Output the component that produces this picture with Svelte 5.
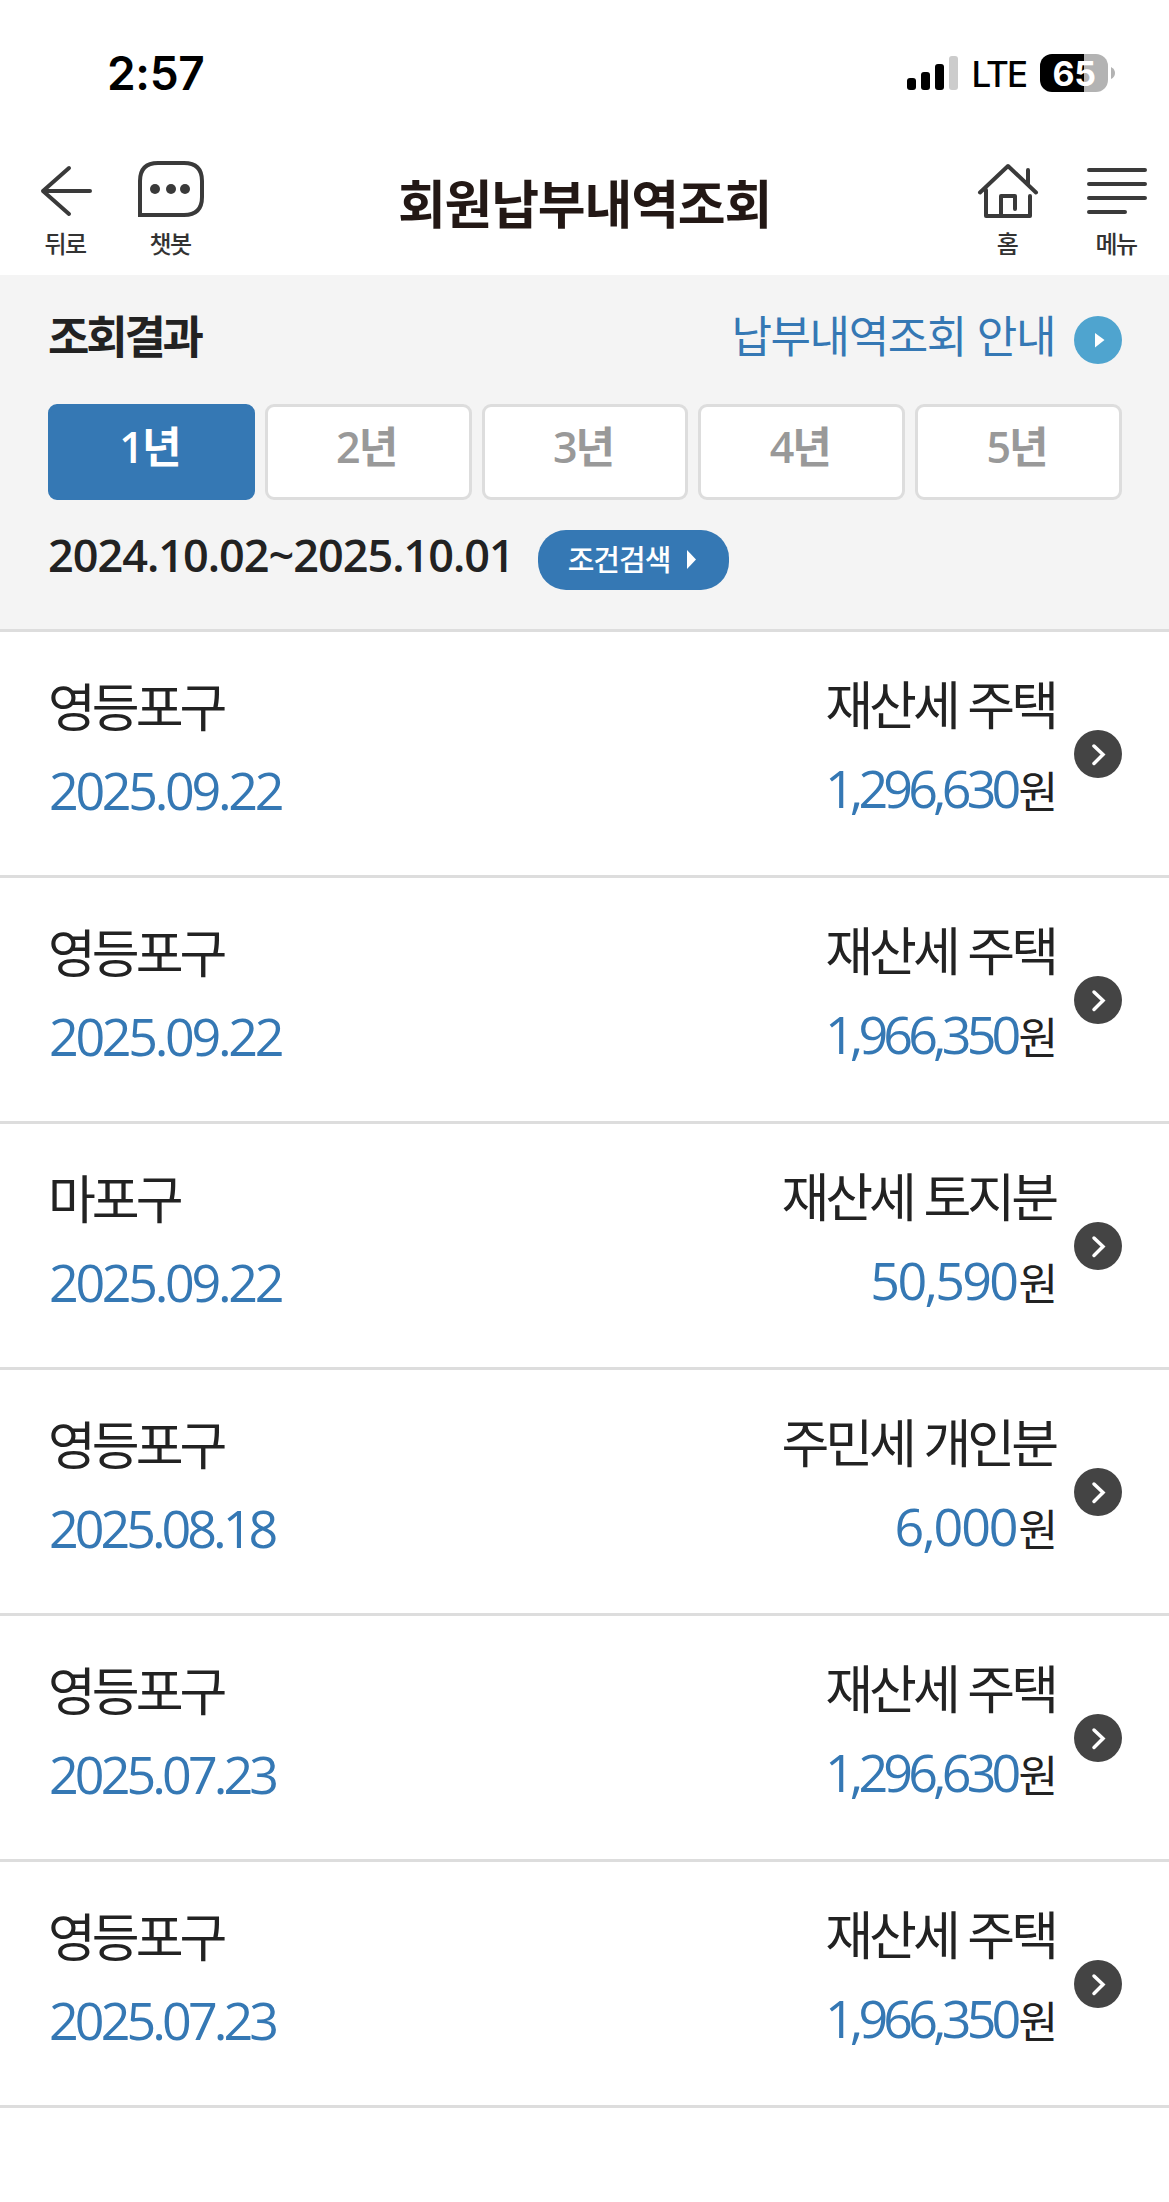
<script>
    const years = [1, 2, 3, 4, 5];
    let selectedYear = 1;

    const payments = [
        { district: "영등포구", date: "2025.09.22", tax: "재산세 주택", amount: "1,296,630" },
        { district: "영등포구", date: "2025.09.22", tax: "재산세 주택", amount: "1,966,350" },
        { district: "마포구", date: "2025.09.22", tax: "재산세 토지분", amount: "50,590" },
        { district: "영등포구", date: "2025.08.18", tax: "주민세 개인분", amount: "6,000" },
        { district: "영등포구", date: "2025.07.23", tax: "재산세 주택", amount: "1,296,630" },
        { district: "영등포구", date: "2025.07.23", tax: "재산세 주택", amount: "1,966,350" },
    ];

    // narrow characters tighten the whole number, wide ones loosen it
    const widths = { 0: 2.5, 1: -13, 7: -6, 8: 3, ",": -3, ".": -4 };

    function tracking(text) {
        const extra = [...text].reduce((sum, char) => sum + (widths[char] || 0), 0);
        return -3 + extra / text.length;
    }

    function selectYear(year) {
        selectedYear = year;
    }
</script>

<main class="page" lang="ko">
    <div class="status">
        <div class="status__time">2:57</div>
        <div class="status__right">
            <svg class="status__signal" width="52" height="36" viewBox="0 0 52 36">
                <rect x="0" y="23" width="9" height="12" rx="3" />
                <rect x="14" y="17" width="9" height="18" rx="3" />
                <rect x="28" y="9" width="9" height="26" rx="3" />
                <rect x="42" y="1" width="9" height="34" rx="3" fill="#ccc" />
            </svg>
            <span class="status__network">LTE</span>
            <div class="battery"><span>65</span></div>
            <svg width="5" height="12" viewBox="0 0 5 12">
                <path d="M0 0Q4 2 4 6T0 12z" fill="#b3b3b3" />
            </svg>
        </div>
    </div>

    <header class="header">
        <button class="header__button back">
            <svg width="66" height="60" viewBox="0 0 66 60">
                <path d="M36 9L10 32L36 55M10 32H57" />
            </svg>
            <span>뒤로</span>
        </button>
        <button class="header__button chat">
            <svg width="68" height="60" viewBox="0 0 68 60">
                <path d="M3 56V22Q3 4 21 4H47Q65 4 65 22V38Q65 56 47 56Z" stroke-linejoin="miter" />
                <g class="dots">
                    <circle cx="18" cy="30" r="5" />
                    <circle cx="34" cy="30" r="5" />
                    <circle cx="48" cy="30" r="5" />
                </g>
            </svg>
            <span>챗봇</span>
        </button>
        <h1>회원납부내역조회</h1>
        <button class="header__button home">
            <svg width="64" height="60" viewBox="0 0 64 60">
                <path d="M4 33.5L32 7L60 33.5M52 11V25M10 31V57H54V37M25 57V37H39V50" />
            </svg>
            <span>홈</span>
        </button>
        <button class="header__button menu">
            <svg width="64" height="60" viewBox="0 0 64 60">
                <path d="M4 11H60M4 25H60M4 39H60M4 53H40" />
            </svg>
            <span>메뉴</span>
        </button>
    </header>

    <section class="filter">
        <div class="filter__top">
            <h2>조회결과</h2>
            <a href="#guide" class="guide">
                <span>납부내역조회 안내</span>
                <svg width="48" height="48" viewBox="0 0 48 48">
                    <circle cx="24" cy="24" r="24" fill="#4fa4cf" />
                    <path d="M21 17L30.500 24L21 31.500z" fill="#fff" />
                </svg>
            </a>
        </div>
        <div class="years">
            {#each years as year}
                <button class:active={year === selectedYear} on:click={() => selectYear(year)}>
                    <span>{year}년</span>
                </button>
            {/each}
        </div>
        <div class="range">
            <span class="range__dates">2024.10.02~2025.10.01</span>
            <button class="range__search">
                <span>조건검색</span>
                <svg width="10" height="20" viewBox="0 0 10 20">
                    <path d="M0 0L9 9.500L0 19z" fill="#fff" />
                </svg>
            </button>
        </div>
    </section>

    <section class="payments">
        {#each payments as payment}
            <div class="payment">
                <div class="payment__left">
                    <div class="payment__name">{payment.district}</div>
                    <div class="payment__date" style="letter-spacing: {tracking(payment.date)}px">{payment.date}</div>
                </div>
                <div class="payment__right">
                    <div class="payment__name">{payment.tax}</div>
                    <div class="payment__amount">
                        <span style="letter-spacing: {tracking(payment.amount)}px">{payment.amount}</span><span class="won">원</span>
                    </div>
                </div>
                <svg class="payment__arrow" width="48" height="48" viewBox="0 0 48 48">
                    <circle cx="24" cy="24" r="24" fill="#444" />
                    <path d="M20 16L29 24.500L20 33.500" fill="none" stroke="#fff" stroke-width="3.500" stroke-linecap="round" />
                </svg>
            </div>
        {/each}
    </section>
</main>

<style>
    :global(body) {
        background: #fff;
    }

    .page {
        width: 1169px;
        min-height: 2202px;
        background: #fff;
        color: #222;
        font-family: "Noto Sans CJK KR", sans-serif;
    }

    button {
        padding: 0;
        border: 0;
        background: none;
        color: inherit;
        font-family: inherit;
    }

    h1,
    h2 {
        margin: 0;
        font-weight: 700;
    }

    svg {
        display: block;
        flex-shrink: 0;
    }

    .status {
        display: flex;
        justify-content: space-between;
        align-items: center;
        box-sizing: border-box;
        height: 146px;
        padding: 0 53px 0 107px;
        color: #000;
        font-family: Inter, sans-serif;
    }

    .status__time {
        font-size: 46px;
        font-weight: 600;
        letter-spacing: -0.3px;
    }

    .status__right {
        display: flex;
        align-items: center;
    }

    .status__network {
        margin: 2px 14px 0 13px;
        font-size: 35px;
        font-weight: 500;
        letter-spacing: -2px;
    }

    .battery {
        width: 68px;
        height: 38px;
        margin-right: 3px;
        border-radius: 12px;
        background: linear-gradient(90deg, #000 44px, #b3b3b3 44px);
        color: #fff;
        font-size: 34px;
        font-weight: 700;
        line-height: 39px;
        letter-spacing: -0.5px;
        text-align: center;
    }

    .header {
        display: flex;
        align-items: flex-start;
        box-sizing: border-box;
        height: 129px;
        padding: 13px 20px 0 33px;
    }

    .header__button {
        display: flex;
        flex-direction: column;
        align-items: center;
        color: #333;
        font-size: 24px;
        font-weight: 500;
        line-height: 30px;
        letter-spacing: -1.7px;
    }

    .header__button span {
        margin: 9px 2px 0 0;
    }

    .header__button svg {
        fill: none;
        stroke: #3a3a3a;
        stroke-width: 4;
        stroke-linecap: round;
        stroke-linejoin: round;
    }

    .header__button .dots {
        fill: #3a3a3a;
        stroke: none;
    }

    .chat {
        margin-left: 38px;
    }

    .menu {
        margin-left: 45px;
    }

    h1 {
        flex: 1;
        margin-top: 15px;
        padding-right: 12px;
        color: #231815;
        font-size: 52px;
        line-height: 56px;
        letter-spacing: -1.2px;
        text-align: center;
    }

    .filter {
        box-sizing: border-box;
        height: 357px;
        padding: 41px 47px 0 48px;
        border-bottom: 3px solid #ddd;
        background: #f4f4f4;
    }

    .filter__top {
        display: flex;
        justify-content: space-between;
        height: 88px;
    }

    h2 {
        font-size: 45px;
        line-height: 38px;
        letter-spacing: -3.2px;
    }

    .guide {
        display: flex;
        gap: 19px;
        color: #3578b4;
        font-size: 44px;
        line-height: 37px;
        letter-spacing: -1.4px;
        text-decoration: none;
    }

    .years {
        display: grid;
        grid-template-columns: repeat(5, 1fr);
        gap: 10px;
    }

    .years button {
        height: 96px;
        border: 3px solid #ddd;
        border-radius: 9px;
        background: #fff;
        color: #999;
        font-family: "Open Sans", "Noto Sans CJK KR", sans-serif;
        font-size: 43px;
        font-weight: 600;
        line-height: 80px;
        letter-spacing: -2px;
    }

    .years button.active {
        border-color: #3578b4;
        background: #3578b4;
        color: #fff;
    }

    .years span {
        display: block;
        height: 90px;
        padding-right: 4px;
    }

    .range {
        display: flex;
        align-items: flex-start;
        margin-top: 30px;
    }

    .range__dates {
        width: 490px;
        font-family: "Open Sans", sans-serif;
        font-size: 45px;
        font-weight: 600;
        line-height: 49px;
        letter-spacing: -1px;
    }

    .range__search {
        display: flex;
        justify-content: center;
        align-items: center;
        gap: 17px;
        width: 191px;
        height: 60px;
        padding-right: 2px;
        border-radius: 28px;
        background: #3578b4;
        color: #fff;
        font-size: 29px;
        font-weight: 500;
        line-height: 56px;
        letter-spacing: -1px;
    }

    .range__search span {
        margin-top: -4px;
    }

    .payment {
        display: flex;
        box-sizing: border-box;
        height: 246px;
        padding: 0 47px 0 48px;
        border-bottom: 3px solid #ddd;
    }

    .payment__left {
        padding-top: 43px;
    }

    .payment__right {
        flex: 1;
        padding-top: 41px;
        text-align: right;
    }

    .payment__name {
        font-size: 52px;
        line-height: 60px;
        letter-spacing: -4px;
    }

    .payment__date,
    .payment__amount {
        margin-top: 25px;
        color: #3578b4;
        font-family: "Open Sans", sans-serif;
        font-size: 52px;
        line-height: 60px;
    }

    .payment__date {
        padding-left: 1px;
    }

    .won {
        margin-left: 2px;
        color: #222;
        font-family: "Noto Sans CJK KR", sans-serif;
        font-size: 43px;
        line-height: 1;
        letter-spacing: -3px;
    }

    .payment__arrow {
        margin: 98px 0 0 19px;
    }
</style>
